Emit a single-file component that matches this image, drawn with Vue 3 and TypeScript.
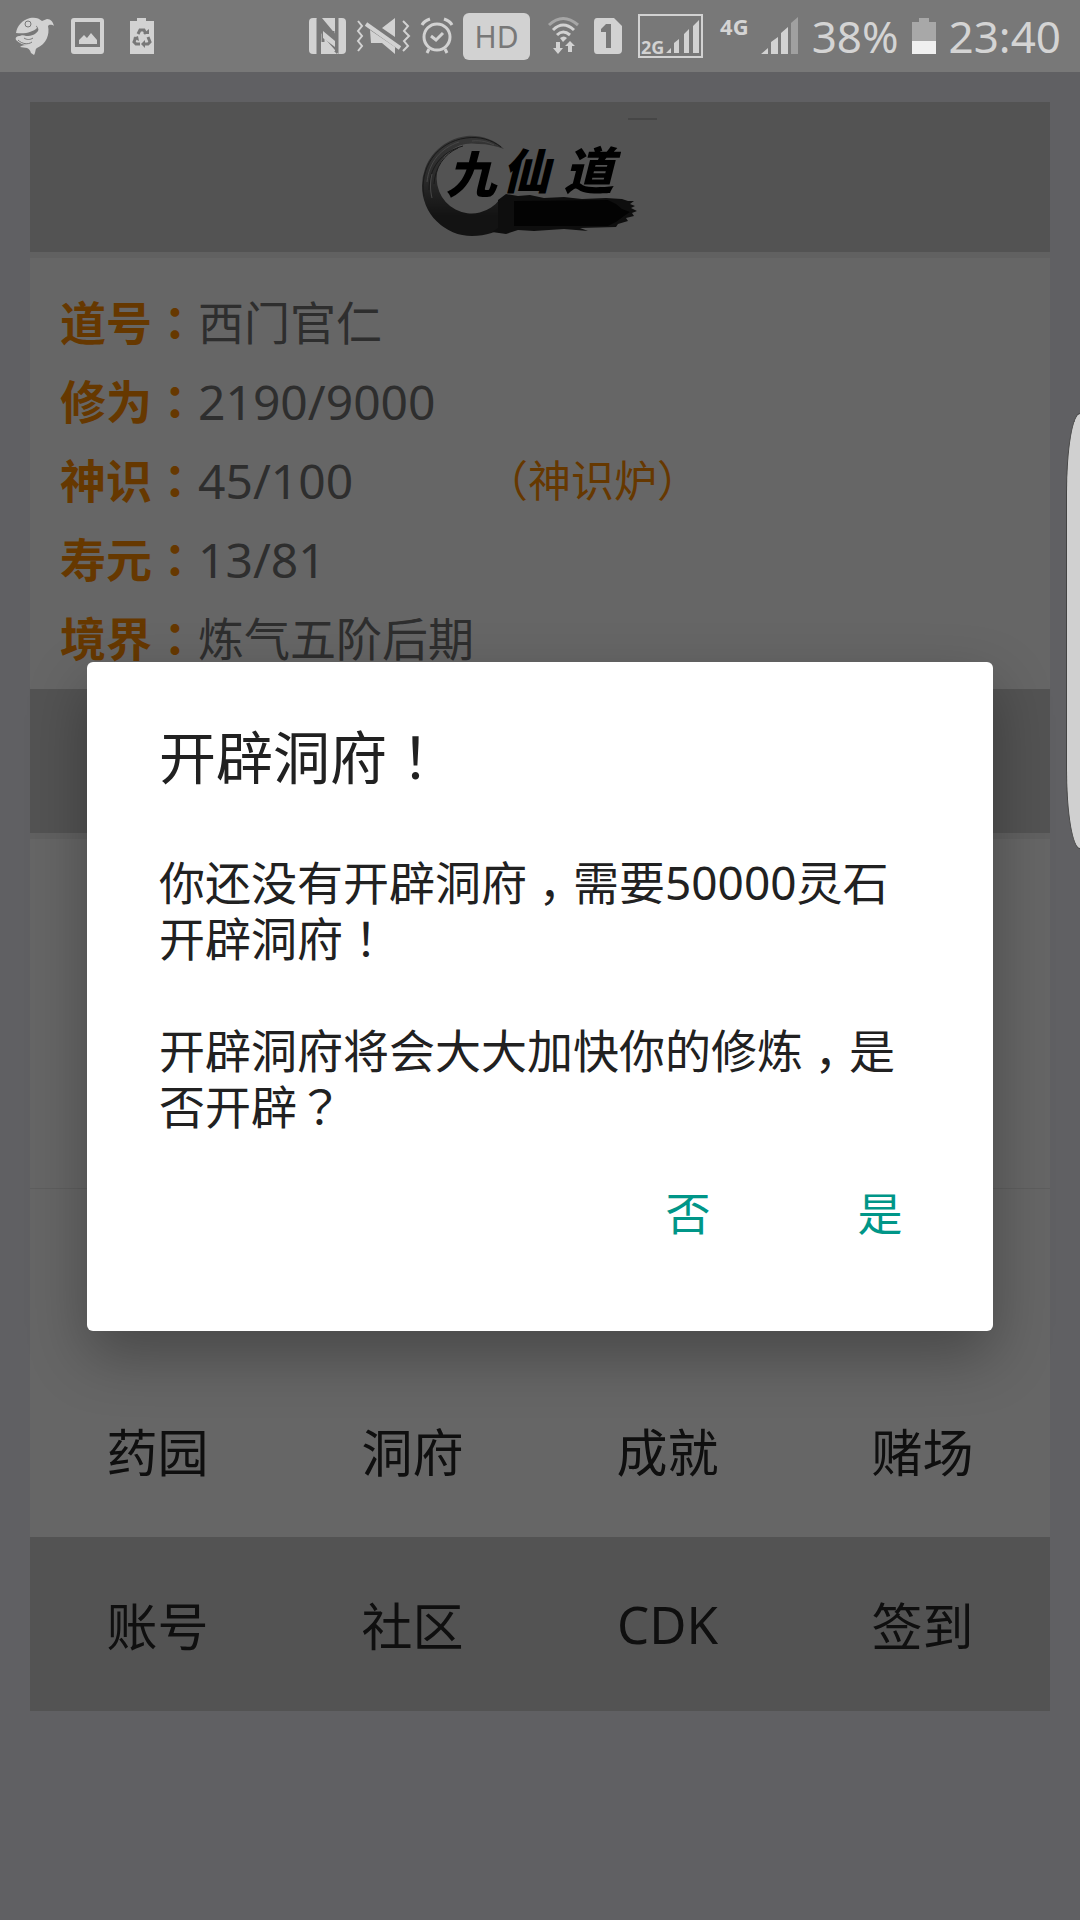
<script setup lang="ts">
import { ref } from 'vue'

interface Stat {
  label: string
  value: string
  numeric?: boolean
  action?: string
}

const stats: Stat[] = [
  { label: '道号', value: '西门官仁' },
  { label: '修为', value: '2190/9000', numeric: true },
  { label: '神识', value: '45/100', numeric: true, action: '（神识炉）' },
  { label: '寿元', value: '13/81', numeric: true },
  { label: '境界', value: '炼气五阶后期' },
]

const places: string[] = ['药园', '洞府', '成就', '赌场']
const tools: string[] = ['账号', '社区', 'CDK', '签到']
const open = ref<boolean>(true)
</script>

<template>
  <div class="screen">
    <header class="status">
      <div class="group left">
        <svg width="41" height="38" viewBox="14 17 41 38">
          <path fill="#d2d2d2" d="M16 33c1-7 6-13 14-15 5-1 9 0 12 3l5-2c4 0 6 3 7 7-3-2-5-1-6 0 2 9-2 18-11 22-2 1-1 4-3 7l-3-2c-1-3-2-4-4-5l-7-1c2-2 6-2 8-2-5 0-9-2-12-5-1-3 1-4 4-4 1-1 4-1 6 0 6 0 10-2 12-5 1-2 0-3-1-3-4 4-11 6-21 5z"/>
          <circle cx="28" cy="24" r="3" fill="none" stroke="#787878"/>
          <path d="M18 40c4 4 10 5 14 2M24 38c3 2 6 2 9 0M36 32c2-2 2-5 0-6" fill="none" stroke="#787878"/>
        </svg>
        <svg width="34" height="36" viewBox="71 18 34 36">
          <path fill="#d2d2d2" fill-rule="evenodd" d="M74 18h27q3 0 3 3v30q0 3-3 3H74q-3 0-3-3V21q0-3 3-3zm1 4v25h25V22z"/>
          <path fill="#d2d2d2" d="M79 44v-4l5-5 3 3 4-5 6 7v4z"/>
        </svg>
        <svg width="24" height="36" viewBox="130 18 24 36">
          <path fill="#d2d2d2" d="M137 18h9v3h8v33h-24V21h7z"/>
          <g fill="none" stroke="#787878" stroke-width="3">
            <path d="M138 34l2-4h4l2 4"/>
            <path d="M148 37l2 5-2 2h-4"/>
            <path d="M140 44h-4l-2-2 2-5"/>
          </g>
          <path fill="#787878" d="M143 34h6v-5zM145 40v8l-4-4zM133 38l5-2 1 5z"/>
        </svg>
      </div>
      <div class="group right">
        <svg width="37" height="36" viewBox="308 18 37 36">
          <rect x="308" y="18" width="37" height="36" rx="4" fill="#d2d2d2"/>
          <path fill="none" stroke="#787878" stroke-width="3" d="M317 54V22l15 17V31M336 18v32l-14-16v8"/>
          <path fill="#787878" d="M316 18l5 0 15 18v16l-16-19v21h-4zM336 54l-3-3h4z"/>
          <path fill="#d2d2d2" d="M322 31l12 10v6l-12-9z"/>
          <path fill="#787878" d="M334 18h3v34h-3z"/>
        </svg>
        <svg width="55" height="38" viewBox="356 17 55 38">
          <g fill="none" stroke="#d2d2d2" stroke-width="2">
            <path d="M358 21l4 5-4 5 4 5-4 5 4 5-4 5"/>
            <path d="M403 21l5 5-4 5 5 5-5 5 4 5-5 5"/>
            <path stroke-width="4" d="M366 24l34 24"/>
          </g>
          <path fill="#d2d2d2" d="M395 18v19l-13-9zM370 30l25 17v7l-13-11h-11z"/>
        </svg>
        <svg width="32" height="36" viewBox="422 18 32 36">
          <g fill="none" stroke="#d2d2d2" stroke-width="3">
            <circle cx="438" cy="37" r="13"/>
            <path d="M432 36l5 4 7-7M423 25q2-4 8-6M453 25q-2-4-8-6M430 49l-2 4M446 49l2 4"/>
          </g>
        </svg>
        <span class="hd">HD</span>
        <svg width="40" height="38" viewBox="540 17 40 38">
          <g fill="none" stroke-width="3">
            <path stroke="#a6a6a6" d="M549 25q14-13 29 0"/>
            <path stroke="#d2d2d2" d="M553 30q10-10 21 0M557 35q6-6 13 0"/>
          </g>
          <path fill="#d2d2d2" d="M560 38q4-3 7 0l-4 4zM556 42h4v6h3l-5 6-5-6h3zM568 52h4v-6h3l-5-5-5 5h3z"/>
        </svg>
        <svg width="34" height="36" viewBox="590 18 34 36">
          <path fill="#d2d2d2" fill-rule="evenodd" d="M597 18h17l8 8v24q0 4-4 4h-21q-3 0-3-4V22q0-4 3-4zm9 6l-5 5v3h5v16h5V24z"/>
        </svg>
        <svg width="76" height="44" viewBox="634 14 76 44">
          <rect x="639" y="15" width="63" height="42" fill="none" stroke="#d2d2d2" stroke-width="2"/>
          <text x="641" y="54" class="net">2G</text>
          <path fill="#d2d2d2" d="M666 53l5-5v5zM674 53V43l5-4v14zM684 53V34l5-5v24zM693 53V26l6-6v33z"/>
        </svg>
        <span class="lte">4G</span>
        <svg width="43" height="38" viewBox="759 16 43 38">
          <path fill="#d2d2d2" d="M761 53l7-6v6zM771 53V41l7-5v17zM781 53V32l7-6v27z"/>
          <path fill="#a0a0a0" d="M791 53V22l7-6v37z"/>
        </svg>
        <span class="reading">38%</span>
        <svg width="30" height="36" viewBox="909 18 30 36">
          <path fill="#a8a8a8" d="M919 18h10v4h7v20h-24V22h7z"/>
          <path fill="#f0f0f0" d="M912 41h24v13h-24z"/>
        </svg>
        <span class="reading">23:40</span>
      </div>
    </header>

    <main class="stage">
      <div class="panel">
        <section class="banner">
          <svg class="logo" width="240" height="130" viewBox="420 110 240 130" role="img" aria-label="九仙道">
            <defs>
              <linearGradient id="ink" x1="0" y1="0" x2="0" y2="1">
                <stop offset="0" stop-color="#888888"/>
                <stop offset="0.45" stop-color="#686868"/>
                <stop offset="0.8" stop-color="#303030"/>
              </linearGradient>
            </defs>
            <path fill="url(#ink)" d="M504 147C494 137 480 133 467 134A50 50 0 0 0 422 184A50 50 0 0 0 472 234C486 234 498 230 508 222L514 196L500 197A35 35 0 1 1 478 142C488 142 496 144 504 147z"/>
            <path fill="none" stroke="#404040" d="M424 194c-5-27 12-54 42-58M466 136c14-2 26 2 35 9M429 188c0-22 12-38 34-44M434 182c1-16 10-30 24-36"/>
            <path fill="none" stroke="#b0b0b0" d="M427 180c2-20 14-34 32-40M432 196c-2-8-2-16 0-24M472 139c9-1 16 1 22 4"/>
            <path fill="#242424" d="M498 198l8-6 12 2 12-1 14 3 20-1 18 2 24-1 16 1 6 2h6l-4 3 5 2-4 2 6 3-5 2 2 3-8 2 2 3-10 3-2 3-36 1 8 3-24-2-30 2-16-1-12 4-14-2 6-4z"/>
            <path fill="#080808" d="M514 199l94-1 8 4 6 5 8 3-6 4-8 6-8 4h-94z"/>
            <path stroke="#909090" d="M628 117h29"/>
            <text x="446" y="191" class="ink-text" font-size="50">九</text>
            <text x="502" y="187" class="ink-text" font-size="48">仙</text>
            <text x="564" y="187" class="ink-text" font-size="50">道</text>
          </svg>
        </section>

        <dl class="stats">
          <div v-for="s in stats" :key="s.label" class="stat">
            <dt>{{ s.label }}<span class="mark">：</span></dt>
            <dd :class="{ numeric: s.numeric }">{{ s.value }}</dd>
            <dd v-if="s.action" class="extra"><button type="button">{{ s.action }}</button></dd>
          </div>
        </dl>

        <div class="divider"></div>
        <div class="blank"></div>

        <nav class="menu places">
          <button v-for="p in places" :key="p" type="button">{{ p }}</button>
        </nav>
        <nav class="menu tools">
          <button v-for="t in tools" :key="t" type="button">{{ t }}</button>
        </nav>
      </div>
    </main>

    <div v-if="open" class="scrim">
      <div class="dialog" role="dialog" aria-modal="true" aria-labelledby="dialog-title">
        <h1 id="dialog-title">开辟洞府<span class="mark">！</span></h1>
        <div class="message">
          <p>你还没有开辟洞府<span class="comma">，</span>需要50000灵石<wbr>开辟洞府<span class="mark">！</span></p>
          <p>开辟洞府将会大大加快你的修炼<span class="comma">，</span>是<wbr>否开辟<span class="mark">？</span></p>
        </div>
        <div class="actions">
          <button type="button" @click="open = false">否</button>
          <button type="button" @click="open = false">是</button>
        </div>
      </div>
    </div>

    <div class="edge-handle"></div>
  </div>
</template>

<style>
body {
  margin: 0;
  background: #606063;
}
</style>

<style scoped>
.screen {
  position: relative;
  display: flex;
  flex-direction: column;
  min-height: 100vh;
  overflow: hidden;
  font-family: "Noto Sans", "Noto Sans CJK SC", sans-serif;
}

button {
  padding: 0;
  border: 0;
  background: none;
  font: inherit;
  color: inherit;
}

.status {
  display: flex;
  align-items: center;
  justify-content: space-between;
  height: 72px;
  padding: 0 19px 0 14px;
  background: #787878;
  color: #d4d4d4;
}

.group {
  display: flex;
  align-items: center;
}

.left {
  gap: 16px;
}

.left svg:last-child {
  margin-left: 9px;
}

.right {
  gap: 10px;
}

.status svg {
  display: block;
  overflow: visible;
}

.hd {
  width: 67px;
  border-radius: 6px;
  background: #d2d2d2;
  color: #787878;
  font-size: 30px;
  line-height: 47px;
  text-align: center;
}

.net {
  fill: #d2d2d2;
  font-size: 18px;
  font-weight: 700;
}

.lte {
  align-self: flex-start;
  padding-top: 14px;
  font-size: 22px;
  font-weight: 700;
  line-height: 24px;
}

.reading {
  font-size: 44px;
  line-height: 72px;
}

.stage {
  flex: 1;
  padding: 30px;
  background: #f0f0f7;
}

.panel {
  background: #f3f3f3;
}

.banner {
  display: flex;
  align-items: center;
  justify-content: center;
  height: 150px;
  margin-bottom: 6px;
  background: #d0d0d0;
}

.ink-text {
  fill: #000;
  font-style: italic;
  font-weight: 900;
}

.stats {
  margin: 0;
  padding: 25px 30px 11px;
  background: #fff;
  font-size: 46px;
  line-height: 79px;
}

.stat {
  display: flex;
  height: 79px;
}

.stat dt {
  width: 138px;
  color: #ff8c00;
  font-weight: 700;
}

/* Full-width punctuation set in the middle of its cell. */
.mark {
  font-family: "Noto Sans CJK TC", "Noto Sans CJK SC", sans-serif;
  line-height: 1;
}

.stat dd {
  min-width: 287px;
  margin: 0;
  color: #737373;
}

.stat .numeric {
  font-size: 48px;
}

.stat .extra {
  color: #ff8c00;
  font-size: 43px;
}

.divider {
  height: 144px;
  margin-bottom: 6px;
  background: #d0d0d0;
}

.blank {
  height: 349px;
  border-bottom: 1px solid #ececec;
  background: #fff;
}

.menu {
  display: grid;
  grid-template-columns: repeat(4, 1fr);
  color: #262626;
  font-size: 51px;
}

.menu button {
  height: 174px;
}

.places {
  padding-top: 174px;
  background: #fff;
}

.tools {
  background: #d0d0d0;
}

.scrim {
  position: absolute;
  inset: 72px 0 0;
  display: flex;
  align-items: center;
  padding: 0 87px;
  background: rgba(0, 0, 0, 0.6);
}

.dialog {
  flex: 1;
  padding: 53px 72px 69px;
  border-radius: 6px;
  background: #fff;
  box-shadow: 0 24px 60px rgba(0, 0, 0, 0.3);
  color: #212121;
}

.dialog h1 {
  margin: 0;
  font-size: 57px;
  font-weight: 400;
  line-height: 84px;
}

.message {
  margin-top: 55px;
  font-size: 46px;
  line-height: 56px;
}

.message p {
  margin: 0;
}

.message p + p {
  margin-top: 56px;
}

/* Half-width comma centred on the baseline of a full-width cell. */
.comma {
  display: inline-block;
  width: 1em;
  font-feature-settings: "halt";
  text-align: center;
}

.actions {
  display: flex;
  justify-content: flex-end;
  gap: 24px;
  margin: 28px -43px 0 0;
}

.actions button {
  width: 168px;
  height: 100px;
  color: #009688;
  font-size: 45px;
}

.edge-handle {
  position: absolute;
  top: 413px;
  right: 0;
  width: 13px;
  height: 434px;
  border: 1px solid #444;
  border-right: 0;
  border-radius: 14px 0 0 14px / 80px 0 0 80px;
  background: #d0d0d0;
}
</style>
